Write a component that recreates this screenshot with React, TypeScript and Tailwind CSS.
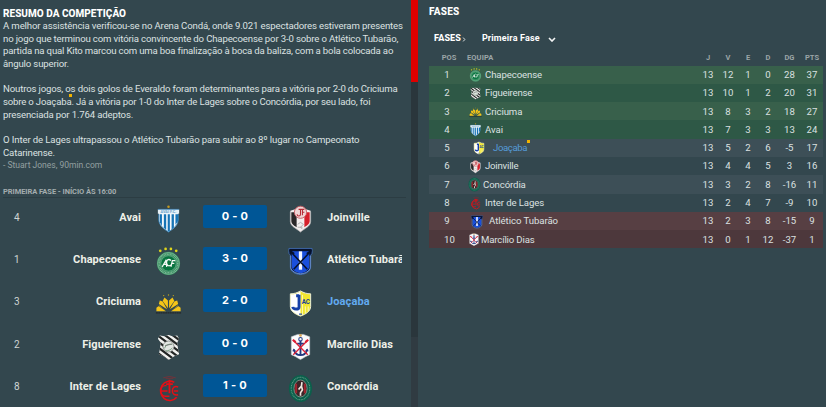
import type { ReactNode } from 'react';

type Club =
  | 'Avai'
  | 'Chapecoense'
  | 'Criciuma'
  | 'Figueirense'
  | 'Inter de Lages'
  | 'Joinville'
  | 'Atlético Tubarão'
  | 'Joaçaba'
  | 'Marcílio Dias'
  | 'Concórdia';

/* Club badges, all drawn on a 26x30 canvas */
const badges: Record<Club, ReactNode> = {
  Avai: (
    <>
      <path d="M3 5h20v10c0 6-4 9-10 13C7 24 3 21 3 15z" fill="#f4f8fb" />
      <path d="M4 9.500h2.200v12L4 18zM8.200 9.500h2.400v16l-2.400-2zM12.200 9.500h2.200v18H13l-.8-.5zM16.200 9.500h2.400v14l-2.400 2zM20.200 9.500H23v7l-2.800 4z" fill="#1673b5" />
      <path d="M2 4.500h22v4.500H2z" fill="#e6f1f8" />
      <path d="M2 4.500h22" stroke="#2b7db8" strokeWidth=".7" />
      <text x="13" y="8.400" fontSize="4" fontWeight="700" textAnchor="middle" fill="#6aa3cb">AVAÍ F.C.</text>
      <path d="M3 9.500v6c0 5 4 8 10 12.500 6-4.500 10-7.500 10-12.500v-6" fill="none" stroke="#2b7db8" strokeWidth=".9" />
      <circle cx="13" cy="1.800" r="1.300" fill="#c49a22" />
    </>
  ),
  Chapecoense: (
    <>
      <circle cx="13" cy="17" r="12" fill="#2f8a5a" />
      <circle cx="13" cy="17" r="11.200" fill="none" stroke="#8fc0a5" strokeWidth=".8" />
      <circle cx="13" cy="17" r="9.600" fill="none" stroke="#7db997" strokeWidth="1.500" strokeDasharray="1 .6" />
      <circle cx="13" cy="17" r="8" fill="#08743f" stroke="#a9cfb9" strokeWidth=".5" />
      <path d="M6.500 20.500l3.700-6.500 1 6.500M8 18h3.500M15.500 14c-2-2-4.500-1-4.500 2s2.500 4.500 4.500 2.500M15.500 20.500l1.500-6.500h3M16.500 17h2.500" fill="none" stroke="#f3f8f4" strokeWidth="1.300" />
      <g fill="#dfd51c">
        <circle cx="4.500" cy="4" r="1.400" />
        <circle cx="10" cy="2" r="1.400" />
        <circle cx="15.500" cy="2" r="1.400" />
        <circle cx="21" cy="4" r="1.400" />
      </g>
    </>
  ),
  Criciuma: (
    <>
      <g fill="#f5c518">
        <path d="M12.400 20L7 12.500l1.800-3.800 3.600 3.300zM13.600 20l5.400-7.500-1.800-3.800-3.600 3.300z" />
        <path d="M11.500 21L3 15.500l1-3.700 3 1.200zM14.500 21l8.500-5.500-1-3.700-3 1.200z" />
        <path d="M10.500 23H.5v-3.500l3-2.500zM15.500 23h10v-3.500l-3-2.500z" />
      </g>
      <path d="M2 17l9 6M24 17l-9 6" stroke="#33474e" strokeWidth=".6" />
      <path d="M0 24.700h26" stroke="#24282a" strokeWidth="1.400" strokeDasharray="2 .4" />
      <g fill="#bfa21d">
        <circle cx="8" cy="6.800" r=".7" />
        <circle cx="13" cy="6.200" r=".7" />
        <circle cx="18" cy="6.800" r=".7" />
      </g>
    </>
  ),
  Figueirense: (
    <>
      <clipPath id="figueirense">
        <path d="M4 3.500l5 1 4-1.500 4 1.500 5-1L24 7l-2 4 1 7 1 5-5 2-6 4-5-4-5-2 1-5 1-7-3-4z" />
      </clipPath>
      <g clipPath="url(#figueirense)">
        <path d="M0 0h26v30H0z" fill="#f0f1ef" />
        <path d="M-3 0l32 24M-3 6l32 24M-3 12l32 24M-3-6l32 24M-3-12l32 24M-3 18l32 24" stroke="#222524" strokeWidth="2.300" />
      </g>
      <circle cx="13" cy="15" r="5.700" fill="#e2e6e2" stroke="#565b58" strokeWidth=".6" />
      <path d="M9 17c1-4 5-5 8-4M10 19.500c3 0 5-1 7-3" fill="none" stroke="#6b9474" strokeWidth=".9" />
      <path d="M9.500 14l7-1.500" stroke="#777c78" strokeWidth="1" />
    </>
  ),
  'Inter de Lages': (
    <g fill="none" stroke="#e50f16">
      <path d="M19 8.700A9.500 10 0 1 0 21.500 24" strokeWidth="1.700" />
      <path d="M11 12H9.500a4.500 5.500 0 0 0 0 11H14M6 17.500h6" strokeWidth="1.500" />
      <path d="M14 6v14M10.500 10.500h7" strokeWidth="1.900" />
      <path d="M23 13.500c-3.500-1.500-6 .5-6 4s2.500 5 6 4M18.500 17.500H23" strokeWidth="1.500" />
      <path d="M7.500 4l6.500-1.500L20.500 4M10 4.500h8" strokeWidth=".8" opacity=".45" />
    </g>
  ),
  Joinville: (
    <>
      <path d="M2.500 6l6.500-2h8l6.500 2v11c0 5-6 7-10.500 11C8.500 24 2.500 22 2.500 17z" fill="#f3eeee" />
      <path d="M3.500 7.500h5.500v15.500c-3-2-5.500-3.500-5.500-6.500z" fill="#292728" />
      <path d="M17 7.500h5.500v9c0 3-2.500 4.500-5.500 6.500z" fill="#d5202b" />
      <circle cx="13" cy="7.500" r="6.300" fill="#f0d5d5" stroke="#c4575e" strokeWidth=".9" />
      <path d="M13 4.500v5c0 2.500-3.500 2.500-3.500 0M11 4.500h6M15 7.500h2M15 4.500v6" fill="none" stroke="#b62b35" strokeWidth="1.100" />
      <path d="M10 20l3-2 3 2-3 3 2 2M10 23h5" fill="none" stroke="#aaa" strokeWidth=".9" />
      <path d="M2.500 7v10c0 5 6 7 10.500 11 4.500-4 10.500-6 10.500-11V7" fill="none" stroke="#b6b3b3" strokeWidth=".7" />
    </>
  ),
  'Atlético Tubarão': (
    <>
      <path d="M1 1.500h24v5l-1.500 2v12c0 5-5 7.500-10.500 8-5.500-.5-10.500-3-10.500-8v-12L1 6.500z" fill="#07112d" stroke="#4a80d2" strokeWidth=".7" />
      <path d="M4 4.500h18v16c0 4-5 6-9 6.800-4-.8-9-2.800-9-6.800z" fill="#1a4fdc" />
      <path d="M3 9v12c0 4 5.500 6.500 10 6.800 4.500-.3 10-2.800 10-6.800V9" fill="none" stroke="#7fa5e6" strokeWidth=".9" />
      <path d="M11.300 4.500h3.400v19h-3.400z" fill="#f5f8ff" />
      <path d="M3 5l17 18M23 5L6 23" stroke="#06112d" strokeWidth="1.600" />
      <path d="M1.500 3.500l5 3.500M24.500 3.500l-5 3.500" stroke="#06112d" strokeWidth="1.800" />
    </>
  ),
  Joaçaba: (
    <>
      <path d="M2.500 5c4 0 7-1 10.500-3 3.500 2 6.500 3 10.500 3v13c0 5-5 8-10.500 10C7.500 26 2.500 23 2.500 18z" fill="#f2e72f" stroke="#eef0dc" />
      <path d="M3 5.500c4 0 7-1 10-3v25c-6-2-10-5-10-9z" fill="#fff" />
      <path d="M15 6v21M18 18v7M21 18v5" stroke="#fbf8b8" strokeWidth="1" />
      <path d="M11.500 6v12.500c0 3-6 3-6.500 0M8.500 7h3" fill="none" stroke="#1741a6" strokeWidth="3" />
      <text x="18.500" y="15.500" fontSize="6.500" fontWeight="700" textAnchor="middle" fill="#173c9b">AC</text>
      <path d="M11.500 26h3" stroke="#1741a6" strokeWidth="1.200" />
    </>
  ),
  'Marcílio Dias': (
    <>
      <path d="M3.500 5l6.500-2.500h6l6.500 2.500v18.500c-3 1-6 3-9.500 5-3.500-2-6.500-4-9.500-5z" fill="#fbfbfc" stroke="#c4cad0" strokeWidth=".6" />
      <circle cx="13" cy="7.500" r="1.800" fill="none" stroke="#253e89" strokeWidth="1.100" />
      <path d="M13 9v15M9.500 12h7M6 18c1.500 5 4 6 7 6s5.500-1 7-6" fill="none" stroke="#24387f" strokeWidth="1.900" />
      <path d="M4.500 20l1.500-3 2.500 3zM21.500 20L20 17l-2.500 3z" fill="#24387f" />
      <path d="M5.500 8.500l15 15M20.500 8.500l-15 15" stroke="#dd1f35" strokeWidth="1.400" />
      <path d="M5 8l3 2.500M21 8l-3 2.500" stroke="#dd1f35" strokeWidth="2.200" />
      <circle cx="13" cy="3.500" r="1.400" fill="#d8a658" />
    </>
  ),
  Concórdia: (
    <>
      <ellipse cx="13" cy="15" rx="12" ry="14" fill="#0c5f4b" />
      <ellipse cx="13" cy="15" rx="9.600" ry="11.600" fill="none" stroke="#5f9a86" strokeWidth="1.100" strokeDasharray="1 .7" />
      <ellipse cx="13" cy="15" rx="6.800" ry="8.800" fill="#3a2628" stroke="#b6c1b7" strokeWidth=".6" />
      <path d="M8.500 10v10M17.500 10v10" stroke="#a3242d" strokeWidth="2" />
      <path d="M14.500 8.500l-.5 4-3 3.500M14 12.500l1 4-2 3v3" fill="none" stroke="#eee7df" strokeWidth="1.700" />
    </>
  )
};

function Badge({ club, className }: { club: Club; className: string }) {
  return (
    <svg viewBox="0 0 26 30" className={`shrink-0 ${className}`} aria-hidden="true">
      {badges[club]}
    </svg>
  );
}

interface Fixture {
  pos: number;
  home: Club;
  score: string;
  away: Club;
}

const fixtures: Fixture[] = [
  { pos: 4, home: 'Avai', score: '0 - 0', away: 'Joinville' },
  { pos: 1, home: 'Chapecoense', score: '3 - 0', away: 'Atlético Tubarão' },
  { pos: 3, home: 'Criciuma', score: '2 - 0', away: 'Joaçaba' },
  { pos: 2, home: 'Figueirense', score: '0 - 0', away: 'Marcílio Dias' },
  { pos: 8, home: 'Inter de Lages', score: '1 - 0', away: 'Concórdia' }
];

interface Standing {
  club: Club;
  stats: number[];
  row: string;
  crest: string;
  name: string;
}

const crest = 'ml-1 w-[13px] h-[14px]';

const standings: Standing[] = [
  { club: 'Chapecoense', stats: [13, 12, 1, 0, 28, 37], row: 'bg-[#38604b]', crest, name: 'ml-[3px] tracking-[-0.1px]' },
  { club: 'Figueirense', stats: [13, 10, 1, 2, 20, 31], row: 'bg-[#2e5846]', crest, name: 'ml-[3px] tracking-[-0.2px]' },
  { club: 'Criciuma', stats: [13, 8, 3, 2, 18, 27], row: 'bg-[#38604b]', crest, name: 'ml-[3px] tracking-[-0.1px]' },
  { club: 'Avai', stats: [13, 7, 3, 3, 13, 24], row: 'bg-[#2e5846]', crest, name: 'ml-[3px]' },
  { club: 'Joaçaba', stats: [13, 5, 2, 6, -5, 17], row: 'bg-[#3d4f57]', crest: 'ml-[7px] w-[14px] h-[14px]', name: 'ml-[7px] tracking-[-0.4px] text-[#559bd8]' },
  { club: 'Joinville', stats: [13, 4, 4, 5, 3, 16], row: '', crest, name: 'ml-[3px] tracking-[-0.2px]' },
  { club: 'Concórdia', stats: [13, 3, 2, 8, -16, 11], row: 'bg-[#3d4f57]', crest: 'ml-[3px] w-[13px] h-[15px]', name: 'ml-[2px] tracking-[-0.1px]' },
  { club: 'Inter de Lages', stats: [13, 2, 4, 7, -9, 10], row: '', crest, name: 'ml-[3px] tracking-[-0.1px]' },
  { club: 'Atlético Tubarão', stats: [13, 2, 3, 8, -15, 9], row: 'bg-[#573f43]', crest: 'ml-[5px] w-[14px] h-[14px]', name: 'ml-[5px] tracking-[-0.05px]' },
  { club: 'Marcílio Dias', stats: [13, 0, 1, 12, -37, 1], row: 'bg-[#4d383c]', crest: 'ml-[3px] w-[12px] h-[15px]', name: 'ml-px tracking-[-0.15px]' }
];

const columns = 'grid grid-cols-[36px_233px_20px_20px_20px_20px_23px_22px] items-center';

function Report() {
  return (
    <section className="h-[186px] pl-[3px] pt-2 text-[9.6px] leading-[12.65px] tracking-[-0.15px] whitespace-nowrap">
      <h1 className="text-[10px] leading-3 font-extrabold text-white tracking-[0.03px]">RESUMO DA COMPETIÇÃO</h1>
      <p>
        <span className="tracking-[-0.14px]">
          A melhor assistência verificou-se no Arena Condá, onde 9.021 espectadores estiveram presentes
        </span>
        <br />
        no jogo que terminou com vitória convincente do Chapecoense por 3-0 sobre o Atlético Tubarão,
        <br />
        <span className="tracking-[-0.17px]">
          partida na qual Kito marcou com uma boa finalização à boca da baliza, com a bola colocada ao
        </span>
        <br />
        ângulo superior.
      </p>
      <p className="mt-[12.65px]">
        Noutros jogos, os dois golos de Everaldo foram determinantes para a vitória por 2-0 do Criciuma
        <br />
        <span className="tracking-[-0.18px]">
          sobre o{' '}
          <span className="relative">
            Joaçaba
            <i className="absolute -right-px -top-[2px] size-[3px] bg-[#f2b400]" />
          </span>
          . Já a vitória por 1-0 do Inter de Lages sobre o Concórdia, por seu lado, foi
        </span>
        <br />
        presenciada por 1.764 adeptos.
      </p>
      <p className="mt-[12.65px]">
        <span className="tracking-[-0.12px]">
          O Inter de Lages ultrapassou o Atlético Tubarão para subir ao 8º lugar no Campeonato
        </span>
        <br />
        Catarinense.
      </p>
      <p className="text-[8.5px] tracking-normal text-[#93a0a1]">- Stuart Jones, 90min.com</p>
    </section>
  );
}

function FixtureRow({ pos, home, score, away }: Fixture) {
  return (
    <div className="flex h-[42.2px] items-start pt-[7px] text-[11px] font-bold text-[#eef0e8]">
      <span className="w-[33px] pl-[14px] pt-[5px] text-[10px] leading-4 font-normal text-[#cfd5d4]">{pos}</span>
      <span className="w-[108px] pt-[5px] text-right leading-4 tracking-[0.08px] whitespace-nowrap">{home}</span>
      <Badge club={home} className="ml-[14px] w-[27px] h-[29px]" />
      <span className="ml-[21px] h-[23px] w-[64px] rounded-[2px] bg-[#005696] text-center font-['Inter',sans-serif] text-[11px] leading-[22px] tracking-[0.25px] text-white">
        {score}
      </span>
      <Badge club={away} className="ml-[20px] w-[27px] h-[29px]" />
      <span className={`ml-[13px] w-[75px] overflow-hidden pt-[5px] leading-4 tracking-[0.12px] whitespace-nowrap ${away === 'Joaçaba' ? 'text-[#62aaf0]' : ''}`}>
        {away}
      </span>
    </div>
  );
}

function Phases() {
  return (
    <section className="flex-1 pl-[11px] pr-[3px]">
      <h2 className="pt-[6px] text-[10px] leading-3 font-extrabold tracking-[0.2px] text-white">FASES</h2>
      <div className="mt-[15px] flex h-3 items-center pl-[5px] text-[9px] font-bold text-white">
        <span className="font-extrabold tracking-[0.1px]">FASES</span>
        <svg viewBox="0 0 4 6" className="ml-px h-[5px] w-1" fill="none" stroke="#dce1e2" strokeWidth="1.200">
          <path d="M1 .7L3 3 1 5.300" />
        </svg>
        <span className="ml-[16px] tracking-[0.15px]">Primeira Fase</span>
        <svg viewBox="0 0 8 5" className="ml-[8px] h-[5px] w-2" fill="none" stroke="#f4f6f6" strokeWidth="1.600">
          <path d="M1 1l3 3 3-3" />
        </svg>
      </div>
      <div className={`${columns} mt-[6px] h-[14.5px] pb-px text-center text-[7.5px] font-bold text-[#9ba5a7]`}>
        <span className="pl-1">POS</span>
        <span className="pl-[2px] text-left tracking-[0.1px]">EQUIPA</span>
        <span>J</span>
        <span>V</span>
        <span>E</span>
        <span>D</span>
        <span>DG</span>
        <span>PTS</span>
      </div>
      {standings.map(({ club, stats, row, crest, name }, index) => (
        <div key={club} className={`${columns} h-[18.3px] pt-px text-center text-[9.6px] ${row}`}>
          <span className={index === 9 ? 'pl-[5px]' : ''}>{index + 1}</span>
          <div className="flex items-center text-left">
            <Badge club={club} className={crest} />
            <span className={`relative ${name}`}>
              {club}
              {club === 'Joaçaba' && <i className="absolute -right-[3px] -top-[1px] size-[3px] bg-[#f2b400]" />}
            </span>
          </div>
          {stats.map((value, i) => (
            <span key={i}>{value}</span>
          ))}
        </div>
      ))}
    </section>
  );
}

export default function App() {
  return (
    <main className="flex h-[407px] w-[826px] overflow-hidden bg-[#33474e] font-['Roboto',sans-serif] text-[#dce1e1]">
      <div className="w-[411px]">
        <Report />
        <h3 className="ml-[3px] mr-[5px] h-3 border-b border-[#2c3d43] text-[7.5px] leading-3 font-bold tracking-[-0.06px] text-[#a4adae]">
          PRIMEIRA FASE - INÍCIO ÀS 16:00
        </h3>
        {fixtures.map((fixture) => (
          <FixtureRow key={fixture.home} {...fixture} />
        ))}
      </div>
      {/* Scrollbar */}
      <div className="flex w-[7px] flex-col bg-[#2a363c]">
        <div className="h-[82px] bg-[#e00000]" />
        <div className="mt-[255px] flex-1 bg-[#303b42]" />
      </div>
      <Phases />
    </main>
  );
}
